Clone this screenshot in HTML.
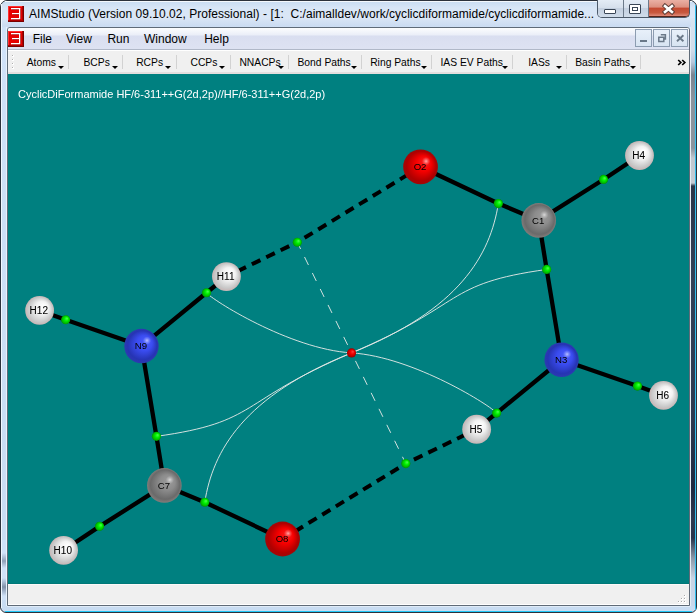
<!DOCTYPE html>
<html><head><meta charset="utf-8">
<style>
html,body{margin:0;padding:0;width:697px;height:613px;overflow:hidden;background:#fff}
*{box-sizing:border-box}
.abs{position:absolute}
#win{position:absolute;left:0;top:0;width:697px;height:613px;background:linear-gradient(#c8dcf2 0px,#d8e6f6 7px,#dae6f6 17px,#cbdcf2 25px,#d0e2f8 27px,#c8dcf2 613px);border:1px solid #2c323c;border-radius:7px 7px 6px 6px;overflow:hidden}
#title{position:absolute;left:0;top:0;width:697px;height:27px;background:linear-gradient(#e2ecf8,#d2e1f3)}
.t{font-family:"Liberation Sans",sans-serif;white-space:pre;position:absolute;color:#000}
#mdi{position:absolute;left:7px;top:27px;width:683px;height:579px;border:1px solid #5f6b78;border-radius:3px 3px 0 0;background:#f0f0f0;overflow:hidden}
#menu{position:absolute;left:0;top:0;width:681px;height:21px;background:linear-gradient(#fcfdfe 0px,#eaeef8 7px,#d9def0 8px,#dde2f2 20px)}
#menuline{position:absolute;left:0;top:21px;width:681px;height:1px;background:#b0b8c8}
#tb{position:absolute;left:0;top:22px;width:681px;height:24px;background:linear-gradient(#ffffff 0px,#ffffff 1px,#f0f0f0 1px,#f0f0f0 22px,#e4dede 22px)}
#view{position:absolute;left:0;top:46px;width:681px;height:510px;background:linear-gradient(#008080 0px,#008080 509px,#007878 509px)}
#status{position:absolute;left:0;top:556px;width:681px;height:21px;background:linear-gradient(#fcf8f8 0px,#fcf8f8 1px,#f0f0f0 1px,#f0f0f0 20px,#fff 20px)}
.sep{position:absolute;top:5px;width:1px;height:14px;background:#d2d2d2}
.arr{position:absolute;width:0;height:0;border-left:3px solid transparent;border-right:3px solid transparent;border-top:3px solid #000}
.tbt{font-size:10.3px;top:5px}
.mt{font-size:12px;top:3px}
svg text{font-family:"Liberation Sans",sans-serif;text-anchor:middle;fill:#000}
.lh{font-size:10px;stroke:#000;stroke-width:0.08px}
.lx{font-size:9.6px}
</style></head><body>
<div id="win"></div>
<div class="abs" style="left:1px;top:4px;width:1px;height:604px;background:#f0f8ff"></div><div class="abs" style="left:5px;top:1px;width:687px;height:1px;background:#f4f8fc"></div>
<div class="abs" style="left:6px;top:27px;width:1px;height:579px;background:#e8f2fc"></div>
<div class="abs" style="left:690px;top:27px;width:1px;height:579px;background:#e4ecf4"></div>
<div class="abs" style="left:691px;top:18px;width:4px;height:588px;background:linear-gradient(#d8e4f0 0px,#d0dcea 32px,#b8c8dc 44px,#7a8490 57px,#8a949e 80px,#8a949e 130px,#c0c8d0 140px,#c4ccd4 165px,#2a3648 168px,#324258 260px,#2c3a50 400px,#1e2a40 470px,#2c3a50 500px,#28344a 520px,#8a98a8 540px,#c8d4e4 560px,#c8d8ec 588px)"></div>
<div class="abs" style="left:695px;top:5px;width:1px;height:605px;background:#30c0f0"></div>
<div class="abs" style="left:7px;top:606px;width:683px;height:1px;background:#e0ecf8"></div>
<div class="abs" style="left:5px;top:611px;width:687px;height:1px;background:#20c8f8"></div>
<div class="abs" style="left:2px;top:540px;width:4px;height:60px;background:linear-gradient(#d0e2f8 0px,#d0e2f8 13px,#90a0b8 21px,#d0e2f8 28px,#d0e2f8 38px,#8090a8 47px,#d0e2f8 56px)"></div>
<svg class="abs" style="left:8px;top:6px" width="16" height="16" viewBox="0 0 16 16">
  <rect x="0" y="0" width="16" height="16" fill="#7a0000"/>
  <rect x="0" y="0" width="15" height="15" fill="#b00000"/>
  <rect x="0" y="0" width="14" height="14" fill="#e60000"/>
  <rect x="0" y="0" width="14" height="1" fill="#ff3030"/>
  <rect x="0" y="0" width="1" height="14" fill="#ff3030"/>
  <rect x="4" y="3" width="9" height="1" fill="#a00000"/>
  <rect x="5" y="8" width="7" height="1" fill="#a00000"/>
  <rect x="4" y="13" width="8" height="1" fill="#a00000"/>
  <rect x="12" y="3" width="1" height="10" fill="#a00000"/>
  <rect x="3" y="2" width="9" height="1.3" fill="#fff"/>
  <rect x="4" y="7" width="7.5" height="1.2" fill="#fff"/>
  <rect x="3" y="12" width="9" height="1.3" fill="#fff"/>
  <rect x="11" y="2" width="1.3" height="11" fill="#fff"/>
</svg>
<div class="t" style="left:29px;top:7px;font-size:12px;letter-spacing:0.028px;color:#000">AIMStudio (Version 09.10.02, Professional) - [1:  C:/aimalldev/work/cyclicdiformamide/cyclicdiformamide...</div>

<div id="mdi">
  <div id="menu"></div>
  <div id="menuline"></div>
  <div id="tb"></div>
  <div id="view"></div>
  <div id="status"></div>
</div>

<!-- menu -->
<svg class="abs" style="left:8px;top:31px" width="16" height="16" viewBox="0 0 16 16">
  <rect x="0" y="0" width="16" height="16" fill="#7a0000"/>
  <rect x="0" y="0" width="15" height="15" fill="#b00000"/>
  <rect x="0" y="0" width="14" height="14" fill="#e60000"/>
  <rect x="0" y="0" width="14" height="1" fill="#ff3030"/>
  <rect x="0" y="0" width="1" height="14" fill="#ff3030"/>
  <rect x="4" y="3" width="9" height="1" fill="#a00000"/>
  <rect x="5" y="8" width="7" height="1" fill="#a00000"/>
  <rect x="4" y="13" width="8" height="1" fill="#a00000"/>
  <rect x="12" y="3" width="1" height="10" fill="#a00000"/>
  <rect x="3" y="2" width="9" height="1.3" fill="#fff"/>
  <rect x="4" y="7" width="7.5" height="1.2" fill="#fff"/>
  <rect x="3" y="12" width="9" height="1.3" fill="#fff"/>
  <rect x="11" y="2" width="1.3" height="11" fill="#fff"/>
</svg>
<div class="t mt" style="left:32.7px;top:32px">File</div>
<div class="t mt" style="left:66px;top:32px">View</div>
<div class="t mt" style="left:107.4px;top:32px">Run</div>
<div class="t mt" style="left:144px;top:32px">Window</div>
<div class="t mt" style="left:204.2px;top:32px">Help</div>
<!-- toolbar -->
<div class="abs" style="left:12px;top:55px;width:2px;height:2px;background:linear-gradient(135deg,#b0b0b0 50%,#fff 50%)"></div>
<div class="abs" style="left:12px;top:59px;width:2px;height:2px;background:linear-gradient(135deg,#b0b0b0 50%,#fff 50%)"></div>
<div class="abs" style="left:12px;top:63px;width:2px;height:2px;background:linear-gradient(135deg,#b0b0b0 50%,#fff 50%)"></div>
<div class="abs" style="left:12px;top:67px;width:2px;height:2px;background:linear-gradient(135deg,#b0b0b0 50%,#fff 50%)"></div>
<div class="t tbt" style="left:26.7px;top:57px">Atoms</div><div class="arr" style="left:58px;top:66px"></div><div class="sep" style="left:68px;top:55px"></div>
<div class="t tbt" style="left:83.5px;top:57px">BCPs</div><div class="arr" style="left:111.7px;top:66px"></div><div class="sep" style="left:122px;top:55px"></div>
<div class="t tbt" style="left:136.2px;top:57px">RCPs</div><div class="arr" style="left:165.4px;top:66px"></div><div class="sep" style="left:176px;top:55px"></div>
<div class="t tbt" style="left:190.5px;top:57px">CCPs</div><div class="arr" style="left:219.3px;top:66px"></div><div class="sep" style="left:230px;top:55px"></div>
<div class="t tbt" style="left:239.4px;top:57px">NNACPs</div><div class="arr" style="left:277.7px;top:66px"></div><div class="sep" style="left:288px;top:55px"></div>
<div class="t tbt" style="left:297.5px;top:57px">Bond Paths</div><div class="arr" style="left:351px;top:66px"></div><div class="sep" style="left:361px;top:55px"></div>
<div class="t tbt" style="left:370.2px;top:57px">Ring Paths</div><div class="arr" style="left:421px;top:66px"></div><div class="sep" style="left:431px;top:55px"></div>
<div class="t tbt" style="left:440.5px;top:57px">IAS EV Paths</div><div class="arr" style="left:502px;top:66px"></div><div class="sep" style="left:512px;top:55px"></div>
<div class="t tbt" style="left:528.2px;top:57px">IASs</div><div class="arr" style="left:556px;top:66px"></div><div class="sep" style="left:566px;top:55px"></div>
<div class="t tbt" style="left:575.2px;top:57px">Basin Paths</div><div class="arr" style="left:630px;top:66px"></div><div class="sep" style="left:640px;top:55px"></div>
<svg class="abs" style="left:677px;top:59px" width="10" height="7" viewBox="0 0 10 7"><path d="M1.2 1l2.6 2.5-2.6 2.5M5.2 1l2.6 2.5-2.6 2.5" fill="none" stroke="#000" stroke-width="1.7"/></svg>
<!-- caption buttons -->
<div class="abs" style="left:597px;top:0;width:93px;height:18px;border:1px solid #4c5a6a;border-top:none;border-radius:0 0 5px 5px;overflow:hidden">
  <div class="abs" style="left:0;top:0;width:25px;height:17px;background:linear-gradient(#e4ecf6,#d6e0ec 45%,#c4d0e0 50%,#d0dcea)"></div>
  <div class="abs" style="left:25px;top:0;width:1px;height:17px;background:#6c7a8a"></div>
  <div class="abs" style="left:26px;top:0;width:24px;height:17px;background:linear-gradient(#e4ecf6,#d6e0ec 45%,#c4d0e0 50%,#d0dcea)"></div>
  <div class="abs" style="left:50px;top:0;width:1px;height:17px;background:#6c7a8a"></div>
  <div class="abs" style="left:51px;top:0;width:41px;height:17px;border-right:1px solid #5a2418;border-bottom:1px solid #5a2418;border-radius:0 0 4px 0;background:linear-gradient(#eab0a4,#dc9080 45%,#c44830 50%,#c85a40 80%,#e08c7c)"></div>
</div>
<div class="abs" style="left:604px;top:9px;width:12px;height:5px;border:1px solid #3a4656;background:#fff;border-radius:1px"></div>
<div class="abs" style="left:629px;top:4px;width:12px;height:10px;border:1px solid #3a4656;background:#fff;border-radius:1px"></div>
<div class="abs" style="left:632px;top:7px;width:6px;height:4px;border:1px solid #3a4656;background:#fff"></div>
<svg class="abs" style="left:662px;top:3px" width="13" height="12" viewBox="0 0 13 12">
  <path d="M3 3 L10 9 M10 3 L3 9" stroke="#5a3a34" stroke-width="4.4" stroke-linecap="square"/>
  <path d="M3 3 L10 9 M10 3 L3 9" stroke="#fff" stroke-width="2.6" stroke-linecap="square"/>
</svg>
<!-- mdi buttons -->
<div class="abs" style="left:635px;top:29px;width:17px;height:18px;border:1px solid #8c9cb0;background:linear-gradient(#e8f0fa,#d8e4f2)"></div>
<div class="abs" style="left:653px;top:29px;width:17px;height:18px;border:1px solid #8c9cb0;background:linear-gradient(#e8f0fa,#d8e4f2)"></div>
<div class="abs" style="left:671px;top:29px;width:17px;height:18px;border:1px solid #8c9cb0;background:linear-gradient(#e8f0fa,#d8e4f2)"></div>
<div class="abs" style="left:640px;top:40px;width:7px;height:2px;background:#6a7888"></div>
<svg class="abs" style="left:653px;top:29px" width="17" height="18" viewBox="0 0 17 18">
 <path d="M7.8 5.8h4.6v4.2h-1.2 M5.8 8.2h5v4.2h-5z" fill="none" stroke="#6a7888" stroke-width="1.5"/>
</svg>
<svg class="abs" style="left:671px;top:29px" width="17" height="18" viewBox="0 0 17 18">
 <path d="M6 6.2 L12.4 12.2 M12.4 6.2 L6 12.2" stroke="#6a7888" stroke-width="1.9"/>
</svg>
<div class="abs" style="left:684px;top:595px;width:2px;height:2px;background:linear-gradient(135deg,#a8a8a8 50%,#fff 50%)"></div><div class="abs" style="left:681px;top:598px;width:2px;height:2px;background:linear-gradient(135deg,#a8a8a8 50%,#fff 50%)"></div><div class="abs" style="left:684px;top:598px;width:2px;height:2px;background:linear-gradient(135deg,#a8a8a8 50%,#fff 50%)"></div><div class="abs" style="left:678px;top:601px;width:2px;height:2px;background:linear-gradient(135deg,#a8a8a8 50%,#fff 50%)"></div><div class="abs" style="left:681px;top:601px;width:2px;height:2px;background:linear-gradient(135deg,#a8a8a8 50%,#fff 50%)"></div><div class="abs" style="left:684px;top:601px;width:2px;height:2px;background:linear-gradient(135deg,#a8a8a8 50%,#fff 50%)"></div>
<svg class="abs" style="left:0;top:0;will-change:transform" width="697" height="613" viewBox="0 0 697 613">
<defs>
<clipPath id="vc"><rect x="8" y="74" width="681" height="510"/></clipPath>
<radialGradient id="gO" cx="0.5" cy="0.5" r="0.5" fx="0.66" fy="0.34"><stop offset="0" stop-color="#ff2020"/><stop offset="0.45" stop-color="#f40000"/><stop offset="0.85" stop-color="#b00000"/><stop offset="1" stop-color="#a00808"/></radialGradient>
<radialGradient id="gN" cx="0.5" cy="0.5" r="0.5" fx="0.66" fy="0.34"><stop offset="0" stop-color="#4a5eff"/><stop offset="0.45" stop-color="#3a4cf0"/><stop offset="0.85" stop-color="#2634b4"/><stop offset="1" stop-color="#2c3ab0"/></radialGradient>
<radialGradient id="gC" cx="0.5" cy="0.5" r="0.5" fx="0.66" fy="0.34"><stop offset="0" stop-color="#9c9c9c"/><stop offset="0.45" stop-color="#8c8c8c"/><stop offset="0.85" stop-color="#6a6a6a"/><stop offset="1" stop-color="#827c7a"/></radialGradient>
<radialGradient id="gH" cx="0.5" cy="0.5" r="0.5" fx="0.66" fy="0.34"><stop offset="0" stop-color="#fff"/><stop offset="0.45" stop-color="#f2f2f2"/><stop offset="0.85" stop-color="#c8c8c8"/><stop offset="1" stop-color="#c8b4b4"/></radialGradient>
<radialGradient id="gB" cx="0.5" cy="0.5" r="0.5" fx="0.66" fy="0.34"><stop offset="0" stop-color="#50ff50"/><stop offset="0.45" stop-color="#00f000"/><stop offset="0.85" stop-color="#00b400"/><stop offset="1" stop-color="#009000"/></radialGradient>
<radialGradient id="gR" cx="0.5" cy="0.5" r="0.5" fx="0.66" fy="0.34"><stop offset="0" stop-color="#ff4040"/><stop offset="0.45" stop-color="#f00000"/><stop offset="0.85" stop-color="#b00000"/><stop offset="1" stop-color="#900000"/></radialGradient>
<radialGradient id="spec" cx="0.66" cy="0.34" r="0.12"><stop offset="0" stop-color="#fff" stop-opacity="0.6"/><stop offset="0.5" stop-color="#fff" stop-opacity="0.25"/><stop offset="1" stop-color="#fff" stop-opacity="0"/></radialGradient>
</defs>
<g clip-path="url(#vc)">
<text x="18" y="98.3" style="font-size:11px;text-anchor:start;fill:#fff">CyclicDiFormamide HF/6-311++G(2d,2p)//HF/6-311++G(2d,2p)</text>
<g stroke="#000" stroke-width="4.3" fill="none" stroke-linejoin="round">
<path d="M420.55 166.8L498.35 203.55L538.75 220.4"/>
<path d="M538.75 220.4L603.5 179.45L639.5 155.5"/>
<path d="M538.75 220.4L546.65 269.45L561.6 359.75"/>
<path d="M561.6 359.75L637.45 386.05L663.5 395.4"/>
<path d="M561.6 359.75L496.6 413.05L476.65 429.25"/>
<path d="M282.55 539.0L204.75 502.25L164.35 485.4"/>
<path d="M164.35 485.4L99.6 526.35L63.6 550.3"/>
<path d="M164.35 485.4L156.45 436.35L141.5 346.05"/>
<path d="M141.5 346.05L65.65 319.75L39.6 310.4"/>
<path d="M141.5 346.05L206.5 292.75L226.45 276.55"/>
</g>
<g stroke="#000" stroke-width="4.0" stroke-dasharray="9.5 6.5" stroke-dashoffset="9.5" fill="none">
<path d="M295.05 243.34L226.45 276.55"/>
<path d="M299.01 241.21L420.55 166.8"/>
<path d="M408.05 462.46L476.65 429.25"/>
<path d="M404.09 464.59L282.55 539.0"/>
</g>
<g stroke="#dfe6e4" stroke-width="0.95" fill="none">
<path d="M351.55 352.9C459.9 309.5 490.2 254.7 498.35 203.55"/>
<path d="M351.55 352.9C243.2 396.3 212.9 451.1 204.75 502.25"/>
<path d="M351.55 352.9C466.6 303.9 443.6 283.7 546.65 269.45"/>
<path d="M351.55 352.9C236.5 401.9 259.5 422.1 156.45 436.35"/>
<path d="M351.55 352.9C414.0 356.8 492.1 406.7 496.6 413.05"/>
<path d="M351.55 352.9C289.1 349.0 211.0 299.1 206.5 292.75"/>
</g>
<g stroke="#dfe6e4" stroke-width="0.95" stroke-dasharray="8.9 8.9" stroke-dashoffset="8.9">
<line x1="351.55" y1="352.9" x2="297.3" y2="242.25"/>
<line x1="351.55" y1="352.9" x2="405.8" y2="463.55"/>
</g>
<circle cx="420.55" cy="166.8" r="17.4" fill="url(#gO)"/>
<circle cx="420.55" cy="166.8" r="17.4" fill="url(#spec)"/>
<circle cx="538.75" cy="220.4" r="17.3" fill="url(#gC)"/>
<circle cx="538.75" cy="220.4" r="17.3" fill="url(#spec)"/>
<circle cx="561.6" cy="359.75" r="17.2" fill="url(#gN)"/>
<circle cx="561.6" cy="359.75" r="17.2" fill="url(#spec)"/>
<circle cx="639.5" cy="155.5" r="14.4" fill="url(#gH)"/>
<circle cx="639.5" cy="155.5" r="14.4" fill="url(#spec)"/>
<circle cx="476.65" cy="429.25" r="14.4" fill="url(#gH)"/>
<circle cx="476.65" cy="429.25" r="14.4" fill="url(#spec)"/>
<circle cx="663.5" cy="395.4" r="14.4" fill="url(#gH)"/>
<circle cx="663.5" cy="395.4" r="14.4" fill="url(#spec)"/>
<circle cx="282.55" cy="539.0" r="17.4" fill="url(#gO)"/>
<circle cx="282.55" cy="539.0" r="17.4" fill="url(#spec)"/>
<circle cx="164.35" cy="485.4" r="17.3" fill="url(#gC)"/>
<circle cx="164.35" cy="485.4" r="17.3" fill="url(#spec)"/>
<circle cx="141.5" cy="346.05" r="17.2" fill="url(#gN)"/>
<circle cx="141.5" cy="346.05" r="17.2" fill="url(#spec)"/>
<circle cx="63.6" cy="550.3" r="14.4" fill="url(#gH)"/>
<circle cx="63.6" cy="550.3" r="14.4" fill="url(#spec)"/>
<circle cx="226.45" cy="276.55" r="14.4" fill="url(#gH)"/>
<circle cx="226.45" cy="276.55" r="14.4" fill="url(#spec)"/>
<circle cx="39.6" cy="310.4" r="14.4" fill="url(#gH)"/>
<circle cx="39.6" cy="310.4" r="14.4" fill="url(#spec)"/>
<circle cx="603.5" cy="179.45" r="4.6" fill="url(#gB)"/>
<circle cx="637.45" cy="386.05" r="4.6" fill="url(#gB)"/>
<circle cx="498.35" cy="203.55" r="4.6" fill="url(#gB)"/>
<circle cx="546.65" cy="269.45" r="4.6" fill="url(#gB)"/>
<circle cx="496.6" cy="413.05" r="4.6" fill="url(#gB)"/>
<circle cx="297.3" cy="242.25" r="4.6" fill="url(#gB)"/>
<circle cx="99.6" cy="526.35" r="4.6" fill="url(#gB)"/>
<circle cx="65.65" cy="319.75" r="4.6" fill="url(#gB)"/>
<circle cx="204.75" cy="502.25" r="4.6" fill="url(#gB)"/>
<circle cx="156.45" cy="436.35" r="4.6" fill="url(#gB)"/>
<circle cx="206.5" cy="292.75" r="4.6" fill="url(#gB)"/>
<circle cx="405.8" cy="463.55" r="4.6" fill="url(#gB)"/>
<circle cx="351.55" cy="352.9" r="4.6" fill="url(#gR)"/>
<text x="420.05" y="170" class="lx">O2</text>
<text x="538.25" y="224" class="lx">C1</text>
<text x="561.1" y="363" class="lx">N3</text>
<text x="638.7" y="159" class="lh">H4</text>
<text x="475.84999999999997" y="433" class="lh">H5</text>
<text x="662.7" y="399" class="lh">H6</text>
<text x="282.05" y="542" class="lx">O8</text>
<text x="163.85" y="489" class="lx">C7</text>
<text x="141.0" y="349" class="lx">N9</text>
<text x="62.800000000000004" y="554" class="lh">H10</text>
<text x="225.64999999999998" y="280" class="lh">H11</text>
<text x="38.800000000000004" y="314" class="lh">H12</text>
</g>
</svg>
</body></html>
